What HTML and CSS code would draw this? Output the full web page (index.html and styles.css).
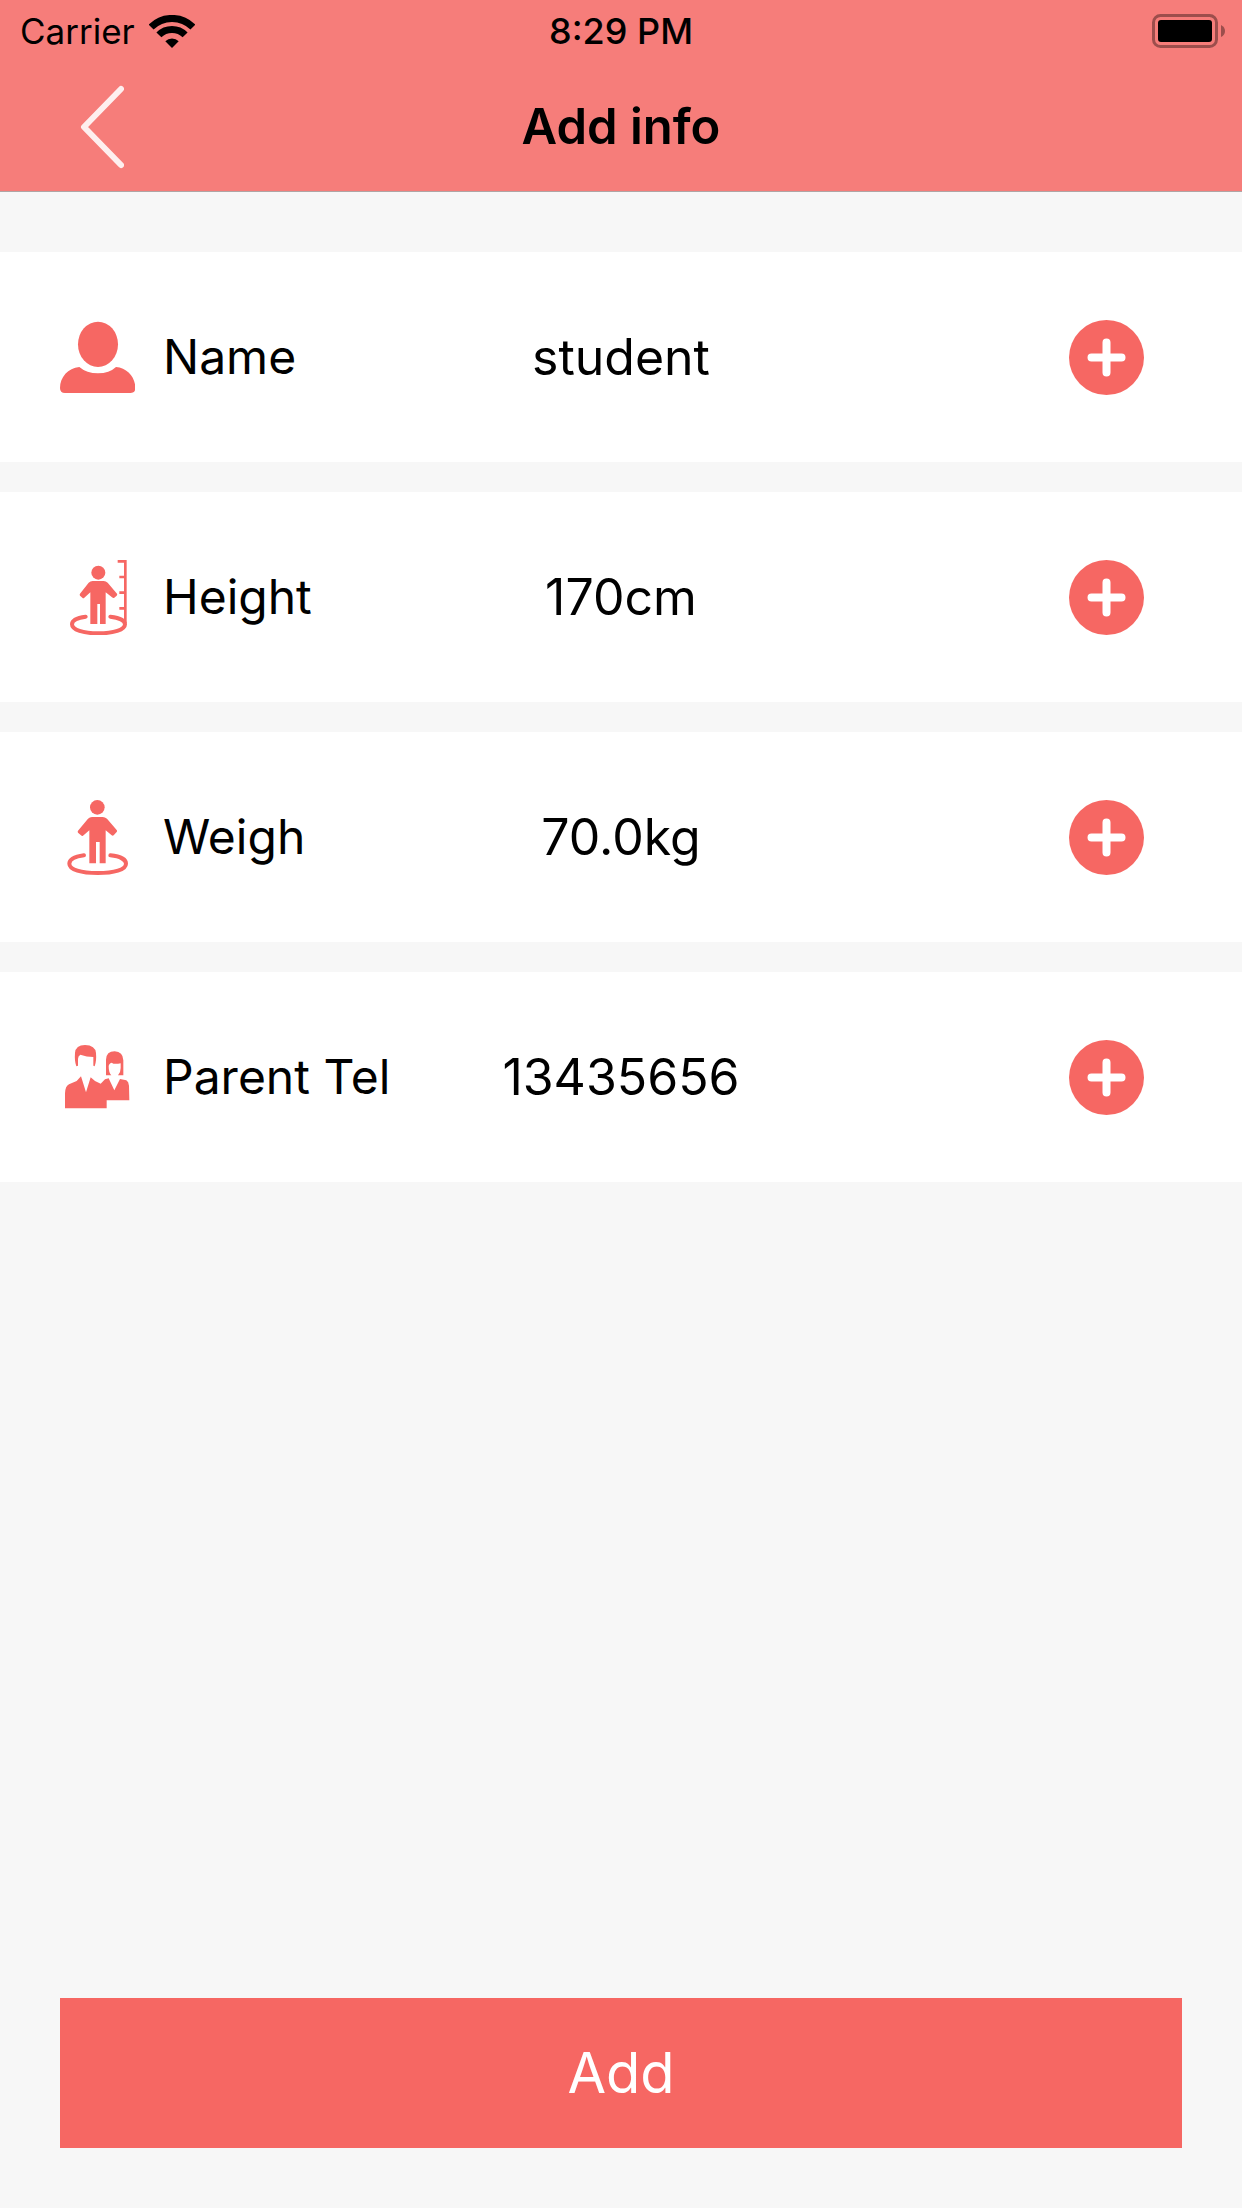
FILE: index.html
```html
<!DOCTYPE html>
<html lang="en">
<head>
  <meta charset="utf-8">
  <meta name="viewport" content="width=device-width, initial-scale=1">
  <title>Add info</title>
  <link rel="stylesheet" href="styles.css">
</head>
<body>
  <svg class="symbols" aria-hidden="true">
    <symbol id="plus" viewBox="0 0 75 75">
      <circle cx="37.5" cy="37.5" r="37.5" fill="#f66763"/>
      <path d="M37.5 22.500V52.500M22.500 37.500H52.500" fill="none" stroke="#fff" stroke-width="8" stroke-linecap="round"/>
    </symbol>
  </svg>

  <header class="header">
    <div class="status">
      <div class="carrier">
        <span>Carrier</span>
        <svg class="wifi" viewBox="0 0 46 33" aria-hidden="true">
          <path d="M2.100 12.100A29.500 29.500 0 0 1 43.900 12.100M9.900 19.900A18.500 18.500 0 0 1 36.100 19.900" fill="none" stroke="#000" stroke-width="7"/>
          <path d="M23 33L16.300 26.300A9.500 9.500 0 0 1 29.700 26.300Z"/>
        </svg>
      </div>
      <span class="time">8:29 PM</span>
      <svg class="battery" viewBox="0 0 74 34" aria-hidden="true">
        <rect x="1.500" y="1.500" width="63" height="31" rx="7" fill="none" stroke="#9c4e4c" stroke-width="3"/>
        <rect x="6" y="6" width="54" height="22" rx="3"/>
        <path d="M69 11Q73 13 73 17Q73 21 69 23Z" fill="#9c4e4c"/>
      </svg>
    </div>
    <nav class="nav">
      <button class="back" type="button" aria-label="Back">
        <svg class="chevron" viewBox="0 0 44 84" aria-hidden="true">
          <path d="M41 4L4 42L41 80" fill="none" stroke="#fff" stroke-opacity=".88" stroke-width="6" stroke-linecap="round" stroke-linejoin="round"/>
        </svg>
      </button>
      <h1 class="title">Add info</h1>
    </nav>
  </header>

  <main class="main">
    <ul class="list">
      <li class="row">
        <div class="field">
          <svg class="icon" viewBox="60 60 225 225" aria-hidden="true">
            <ellipse cx="174" cy="133" rx="60" ry="68"/>
            <path d="M118 201Q140 220 174 220Q208 220 228 201C262 204 286 232 286 264Q286 279 271 279H75Q60 279 60 264C60 232 84 204 118 201Z"/>
          </svg>
          <span>Name</span>
        </div>
        <span class="value">student</span>
        <button class="edit" type="button" aria-label="Edit name"><svg class="plus"><use href="#plus"/></svg></button>
      </li>
      <li class="row">
        <div class="field">
          <svg class="icon" viewBox="30 45 225 225" aria-hidden="true">
            <circle cx="145" cy="83" r="21"/>
            <path d="M128 108H161Q168 108 173 113L201 146Q203 149 200 152L192 159Q189 160 186 157L167 142V237H150V177H142V237H121V142L103 158Q100 161 97 158L90 152Q88 149 90 146L116 113Q121 108 128 108Z"/>
            <path class="line" d="M107 215C82 218 66 226 66 238C66 255 100 265 145 265S225 255 225 238C225 227 207 218 181 215" stroke-width="12"/>
            <path class="line line-flat" d="M203 49H226V234M208 96H226M208 143H226M208 190H226" stroke-width="8"/>
          </svg>
          <span>Height</span>
        </div>
        <span class="value">170cm</span>
        <button class="edit" type="button" aria-label="Edit height"><svg class="plus"><use href="#plus"/></svg></button>
      </li>
      <li class="row">
        <div class="field">
          <svg class="icon" viewBox="30 45 225 225" aria-hidden="true">
            <circle cx="142" cy="67" r="22"/>
            <path d="M126 96H158Q165 96 171 101L200 135Q203 138 200 141L191 151Q188 153 185 151L167 136V235H149V171H138V235H118V136L99 152Q96 154 93 151L84 143Q82 140 84 137L114 101Q119 96 126 96Z"/>
            <path class="line" d="M102 211C74 215 58 223 58 236C58 254 94 264 143 264S228 254 228 236C228 224 211 214 181 211" stroke-width="12"/>
          </svg>
          <span>Weigh</span>
        </div>
        <span class="value">70.0kg</span>
        <button class="edit" type="button" aria-label="Edit weight"><svg class="plus"><use href="#plus"/></svg></button>
      </li>
      <li class="row">
        <div class="field">
          <svg class="icon" viewBox="30 45 225 225" aria-hidden="true">
            <path d="M79 124Q73 108 75 84Q77 60 105 60Q136 61 138 84Q140 108 134 124L130 122V96Q110 96 91 89Q84 93 84 102V122Z"/>
            <path d="M168 151V104Q169 79 194 79Q219 80 220 106V151H204Q212 143 212 129V115Q192 119 185 113Q176 116 176 124Q176 143 184 151Z"/>
            <path d="M45 250V205Q46 183 57 178L80 168L93 154L108 202L122 157L135 168L152 176L165 163L176 160L193 196L210 162L229 166Q236 170 237 182L238 226H170V250Z"/>
          </svg>
          <span>Parent Tel</span>
        </div>
        <span class="value">13435656</span>
        <button class="edit" type="button" aria-label="Edit parent telephone"><svg class="plus"><use href="#plus"/></svg></button>
      </li>
    </ul>
    <button class="submit" type="button">Add</button>
  </main>
</body>
</html>
```

FILE: styles.css
```css
* {
  box-sizing: border-box;
}

body {
  display: flex;
  flex-direction: column;
  min-height: 100vh;
  margin: 0;
  background: #f7f7f7;
  color: #000;
  font-family: Inter, "Liberation Sans", sans-serif;
  font-size: 48px;
  line-height: 60px;
}

button {
  padding: 0;
  border: 0;
  background: none;
  font: inherit;
  cursor: pointer;
}

svg {
  display: block;
}

.symbols {
  display: none;
}

.header {
  border-bottom: 1px solid #b0a5a5;
  background: #f67d7a;
}

.status {
  display: grid;
  grid-template-columns: 1fr auto 1fr;
  align-items: center;
  height: 62px;
  padding: 0 16px 0 20px;
}

.carrier {
  display: flex;
  align-items: center;
  gap: 14px;
  font-size: 35px;
}

.wifi {
  width: 46px;
  height: 33px;
}

.time {
  margin-right: 4px;
  font-size: 36px;
  font-weight: 500;
}

.battery {
  justify-self: end;
  width: 74px;
  height: 34px;
}

.nav {
  display: grid;
  grid-template-columns: 1fr auto 1fr;
  align-items: center;
  height: 129px;
  padding: 0 80px;
}

.back {
  justify-self: start;
}

.chevron {
  width: 44px;
  height: 84px;
}

.title {
  margin: 0;
  font-size: 49px;
  font-weight: 600;
}

.main {
  display: flex;
  flex: 1;
  flex-direction: column;
  justify-content: space-between;
  gap: 60px;
  padding: 60px 0;
}

.list {
  display: grid;
  gap: 30px;
  margin: 0;
  padding: 0;
  list-style: none;
}

.row {
  display: grid;
  grid-template-columns: 1fr auto 1fr;
  align-items: center;
  min-height: 210px;
  padding: 0 60px;
  background: #fff;
}

.field {
  display: flex;
  align-items: center;
  gap: 28px;
}

.icon {
  width: 75px;
  height: 75px;
  fill: #f66763;
}

.line {
  fill: none;
  stroke: #f66763;
  stroke-linecap: round;
}

.line-flat {
  stroke-linecap: butt;
}

.value {
  font-size: 50px;
}

.edit {
  justify-self: end;
  margin-right: 38px;
}

.plus {
  width: 75px;
  height: 75px;
}

.submit {
  height: 150px;
  margin: 0 60px;
  background: #f66763;
  color: #fff;
  font-size: 56px;
}
```
